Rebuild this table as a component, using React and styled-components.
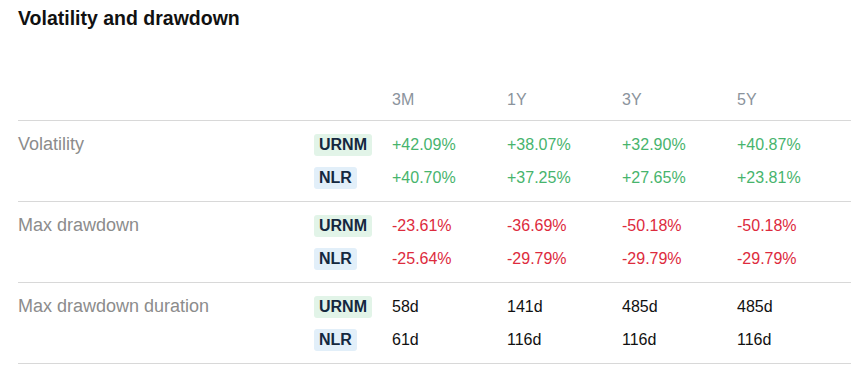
import React from 'react'
import styled, { createGlobalStyle } from 'styled-components';

const GlobalStyle = createGlobalStyle`
  body {
    margin: 0;
    background: #fff;
    font-family: "Liberation Sans", Arial, sans-serif;
  }
`;

const Wrapper = styled.div`
  width: 833px;
  padding: 6px 0 0 18px;
`;

const Title = styled.h2`
  margin: 0 0 50px;
  font-size: 19.5px;
  line-height: 24px;
  font-weight: 700;
  color: #111;
`;

const Grid = styled.div`
  display: grid;
  grid-template-columns: 296px 78px repeat(4, 115px);
  align-items: center;
`;

const HeaderRow = styled(Grid)`
  height: 40px;
  font-size: 16px;
  color: #8b939c;
`;

const Group = styled.div`
  border-top: 1px solid #d8d8d8;
  padding: 7px 0;

  &:last-child {
    border-bottom: 1px solid #d8d8d8;
  }
`;

const Row = styled(Grid)`
  height: 33px;
`;

const Label = styled.span`
  font-size: 18px;
  color: #8c8c8c;
`;

const Badge = styled.span`
  justify-self: start;
  padding: 0 5px;
  height: 22px;
  line-height: 22px;
  border-radius: 3px;
  font-size: 16px;
  font-weight: 700;
  color: #14283f;
  background: ${p => (p.$tone === 'green' ? '#e2f4e8' : '#e2eff9')};
`;

const Value = styled.span`
  font-size: 16px;
  color: ${p => ({ up: '#47b46d', down: '#dd2b3d' }[p.$kind] || '#111')};
`;

const periods = ['3M', '1Y', '3Y', '5Y'];

const groups = [
  {
    label: 'Volatility',
    kind: 'up',
    rows: [
      { ticker: 'URNM', values: ['+42.09%', '+38.07%', '+32.90%', '+40.87%'] },
      { ticker: 'NLR', values: ['+40.70%', '+37.25%', '+27.65%', '+23.81%'] },
    ],
  },
  {
    label: 'Max drawdown',
    kind: 'down',
    rows: [
      { ticker: 'URNM', values: ['-23.61%', '-36.69%', '-50.18%', '-50.18%'] },
      { ticker: 'NLR', values: ['-25.64%', '-29.79%', '-29.79%', '-29.79%'] },
    ],
  },
  {
    label: 'Max drawdown duration',
    kind: 'plain',
    rows: [
      { ticker: 'URNM', values: ['58d', '141d', '485d', '485d'] },
      { ticker: 'NLR', values: ['61d', '116d', '116d', '116d'] },
    ],
  },
];

export default function App() {
  return (
    <Wrapper>
      <GlobalStyle />
      <Title>Volatility and drawdown</Title>
      <HeaderRow>
        <span />
        <span />
        {periods.map(p => <span key={p}>{p}</span>)}
      </HeaderRow>
      <div>
        {groups.map(g => (
          <Group key={g.label}>
            {g.rows.map((r, i) => (
              <Row key={r.ticker}>
                <Label>{i === 0 ? g.label : ''}</Label>
                <Badge $tone={r.ticker === 'URNM' ? 'green' : 'blue'}>{r.ticker}</Badge>
                {r.values.map((v, j) => <Value key={j} $kind={g.kind}>{v}</Value>)}
              </Row>
            ))}
          </Group>
        ))}
      </div>
    </Wrapper>
  )
}
